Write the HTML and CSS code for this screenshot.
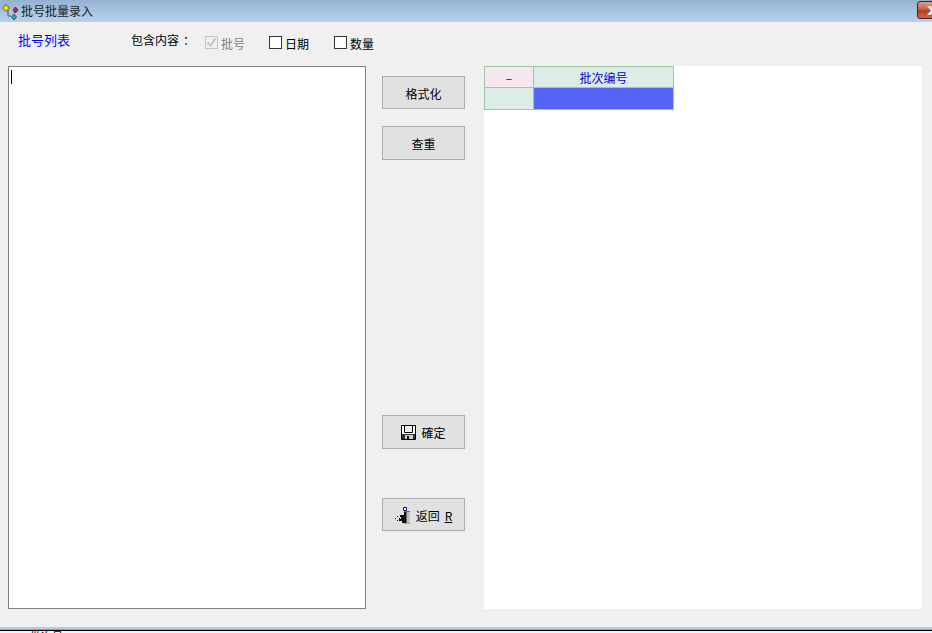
FILE: index.html
```html
<!DOCTYPE html>
<html lang="zh-CN">
<head>
  <meta charset="UTF-8" />
  <title>批号批量录入</title>
  <link rel="stylesheet" href="styles.css">
</head>
<body>
  <div class="window">
    <header class="titlebar">
      <svg class="app-icon" width="18" height="18" viewBox="0 0 18 18">
        <path d="M7 8v6h3M13 11l1-2" stroke="#555" stroke-width="1" fill="none" />
        <path d="M5 2.500l3.500 3.500-3.500 3.500-3.500-3.500z" fill="#f8e800" stroke="#222" stroke-width=".7" />
        <path d="M14.500 5l2.500 3-2.500 3-2.500-3z" fill="#d8107c" stroke="#222" stroke-width=".7" />
        <path d="M13 12l2.500 3-2.500 3-2.500-3z" fill="#14b8bc" stroke="#222" stroke-width=".7" />
      </svg>
      <span class="title">批号批量录入</span>
      <div class="close-btn"><span class="close-x"></span></div>
    </header>

    <div class="options">
      <span class="list-label">批号列表</span>
      <span class="include-label">包含内容<span class="colon">：</span></span>
      <label class="check disabled"><span class="box">
        <svg width="11" height="11" viewBox="0 0 11 11"><path d="M1.5 5.5l3 3 5-7" fill="none" stroke="#c4c4c4" stroke-width="2" /></svg>
      </span><span class="check-text">批号</span></label>
      <label class="check date"><span class="box"></span><span class="check-text">日期</span></label>
      <label class="check qty"><span class="box"></span><span class="check-text">数量</span></label>
    </div>

    <main class="content">
      <div class="batch-input"><span class="caret"></span></div>

      <div class="actions">
        <button class="btn btn-format">格式化</button>
        <button class="btn btn-check">查重</button>
        <button class="btn btn-ok">
          <svg width="15" height="15" viewBox="0 0 15 15">
            <path d="M.5.5h14v14H.5z" fill="#fff" stroke="#000" />
            <path d="M3.500 1v6.500h8V1" fill="#eee" stroke="#000" />
            <path d="M1 9h13v5H1z" fill="#333" />
            <path d="M4 10h8v4H4z" fill="#ccc" />
            <path d="M6 11h2v3H6z" fill="#111" />
          </svg>
          確定
        </button>
        <button class="btn btn-back">
          <svg width="16" height="17" viewBox="0 0 16 17">
            <path d="M8.500.5h3v3h-3z" fill="#fff" stroke="#10108c" />
            <path d="M9 4h6v12.500H9z" fill="#666" />
            <path d="M12 5h3v11h-3z" fill="#c0c0c0" />
            <path d="M9 5h2v11H9zM5 8h4v2H5zM6 10h3v2H6zM4 12h5v2H4zM7 14h2v2H7z" fill="#111" />
            <path d="M0 11h1v1H0zM2 9h1v1H2zM2 13h1v1H2zM4 11h1v1H4z" fill="#111" />
          </svg>
          返回 <u>R</u>
        </button>
      </div>

      <section class="grid-panel">
        <table class="batch-grid">
          <tr>
            <th class="corner">–</th>
            <th class="col-head">批次编号</th>
          </tr>
          <tr>
            <td class="row-head"></td>
            <td class="selected"></td>
          </tr>
        </table>
      </section>
    </main>
  </div>

  <div class="behind">批次号</div>
</body>
</html>
```

FILE: styles.css
```css
* {
  box-sizing: border-box;
  margin: 0;
  padding: 0;
}

html,
body {
  height: 633px;
  overflow: hidden;
}

body {
  background: #f4f0fb;
  color: #000;
  font-family: "Noto Sans CJK SC", "Liberation Sans", sans-serif;
  font-size: 12px;
}

.window {
  height: 631px;
  background: #f0f0f0;
  display: flex;
  flex-direction: column;
  border-bottom: 1px solid #000;
  box-shadow: inset 0 -1px 0 #3cc4e8, inset 0 -3px 0 #b4cce4;
}

/* title bar */
.titlebar {
  height: 22px;
  flex-shrink: 0;
  display: flex;
  align-items: center;
  position: relative;
  background: linear-gradient(to bottom, #96b2d2, #b8d2ea);
}

.app-icon {
  margin-left: 1px;
}

.title {
  margin-left: 2px;
  color: #1c1c1c;
  font-size: 12px;
  line-height: 22px;
}

.close-btn {
  position: absolute;
  left: 917px;
  top: 1px;
  width: 30px;
  height: 18px;
  border: 1px solid #4a2030;
  border-radius: 3px;
  background: linear-gradient(to bottom, #dca08c 0%, #c86048 45%, #b83c1c 55%, #cc6a4c 100%);
}

.close-x {
  position: absolute;
  left: 9px;
  top: 4px;
  width: 12px;
  height: 9px;
  background: #eee;
  clip-path: polygon(0 0, 30% 0, 50% 30%, 70% 0, 100% 0, 68% 50%, 100% 100%, 70% 100%, 50% 70%, 30% 100%, 0 100%, 32% 50%);
}

/* option row */
.options {
  height: 44px;
  flex-shrink: 0;
  display: flex;
  align-items: flex-start;
  padding-left: 18px;
}

.list-label {
  color: #0000ff;
  font-size: 13px;
  line-height: 18px;
  width: 112px;
  margin-top: 9px;
}

.include-label {
  width: 75px;
  line-height: 18px;
  margin-top: 9px;
  padding-left: 1px;
}

.colon {
  margin-left: 4px;
}

.check {
  display: flex;
  align-items: flex-start;
  gap: 3px;
  margin-top: 14px;
}

.check-text {
  line-height: 18px;
  margin-top: -1px;
}

.check.disabled {
  color: #808080;
  width: 64px;
}

.check.date {
  width: 65px;
}

.box {
  width: 13px;
  height: 13px;
  border: 1px solid #333;
  background: #fff;
  display: flex;
  align-items: center;
  justify-content: center;
}

.disabled .box {
  border-color: #c4c4c4;
  background: #f0f0f0;
}

/* main area */
.content {
  height: 543px;
  flex-shrink: 0;
  display: flex;
  padding-left: 8px;
}

.batch-input {
  width: 358px;
  background: #fff;
  border: 1px solid #808080;
  padding: 3px 2px;
}

.caret {
  display: block;
  width: 1px;
  height: 14px;
  background: #000;
}

.actions {
  width: 83px;
  margin-left: 16px;
  padding-top: 10px;
  display: flex;
  flex-direction: column;
}

.btn {
  width: 83px;
  height: 33px;
  flex-shrink: 0;
  background: #e1e1e1;
  border: 1px solid #adadad;
  font-family: inherit;
  font-size: 12px;
  color: #000;
  display: flex;
  align-items: center;
  justify-content: center;
  gap: 5px;
}

.btn-format {
  padding-top: 2px;
}

.btn-check {
  height: 34px;
  margin-top: 17px;
  padding-top: 1px;
}

.btn-ok {
  height: 34px;
  margin-top: 255px;
}

.btn-back {
  margin-top: 49px;
  padding-top: 2px;
}

.grid-panel {
  width: 438px;
  margin-left: 19px;
  background: #fff;
}

.batch-grid {
  width: 190px;
  table-layout: fixed;
  border-collapse: collapse;
}

.batch-grid th,
.batch-grid td {
  border: 1px solid #a0c8a0;
  font-weight: normal;
  font-size: 12px;
  text-align: center;
}

.batch-grid tr:first-child {
  height: 21px;
}

.batch-grid tr:last-child {
  height: 22px;
}

.corner {
  width: 49px;
  background: #f5e6f0;
  color: #0000a0;
}

.col-head {
  background: #dcece6;
  color: #0000e0;
}

.row-head {
  background: #dcece6;
}

.selected {
  background: #5566f6;
}

/* sliver of the form behind this dialog */
.behind {
  margin-left: 30px;
  height: 2px;
  overflow: hidden;
  line-height: 11px;
  font-size: 11px;
}
```
